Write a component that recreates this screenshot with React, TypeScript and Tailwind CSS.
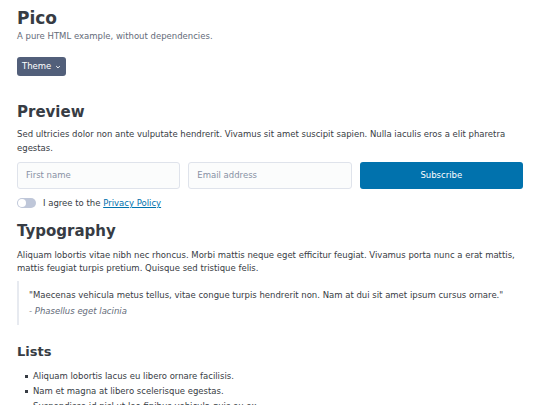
import React from "react";

export default function App() {
  return (
    <div className="min-h-[405px] bg-white px-[17px] text-[#373c44]" style={{ fontFamily: '"DejaVu Sans", sans-serif' }}>
      <div className="pt-[6px]">
        <h1 className="text-[17px] font-bold leading-[24px] text-[#373c44]">Pico</h1>
        <p className="text-[8.5px] leading-[12px] text-[#646b79]">A pure HTML example, without dependencies.</p>
      </div>
      <div className="mt-[15px]">
        <button className="flex h-[19px] items-center gap-[4px] rounded-[3px] bg-[#525f7a] px-[5px] text-[8.5px] text-white">
          Theme
          <svg width="6" height="6" viewBox="0 0 10 10" fill="none" stroke="white" strokeWidth="1.6">
            <path d="M2 3.5 L5 6.5 L8 3.5" />
          </svg>
        </button>
      </div>
      <section className="mt-[25px]">
        <h2 className="text-[15px] font-bold leading-[22px]">Preview</h2>
        <p className="mt-[4px] text-[8.5px] leading-[14px]">
          Sed ultricies dolor non ante vulputate hendrerit. Vivamus sit amet suscipit sapien. Nulla iaculis eros a elit pharetra egestas.
        </p>
        <div className="mt-[7px] grid grid-cols-3 gap-[8px]">
          <div className="flex h-[27px] items-center rounded-[3px] border border-[#dfe3eb] bg-[#fbfcfc] px-[8px] text-[8.5px] text-[#8891a4]">First name</div>
          <div className="flex h-[27px] items-center rounded-[3px] border border-[#dfe3eb] bg-[#fbfcfc] px-[8px] text-[8.5px] text-[#8891a4]">Email address</div>
          <div className="flex h-[27px] items-center justify-center rounded-[3px] bg-[#0172ad] text-[8.5px] text-white">Subscribe</div>
        </div>
        <div className="mt-[7px] flex items-center gap-[7px] text-[8.5px] leading-[14px]">
          <div className="relative h-[10px] w-[19px] rounded-full bg-[#bfc7d9]">
            <div className="absolute left-[1px] top-[1px] h-[8px] w-[8px] rounded-full bg-white" />
          </div>
          <span>
            I agree to the <span className="text-[#0172ad] underline">Privacy Policy</span>
          </span>
        </div>
      </section>
      <section className="mt-[10px]">
        <h2 className="text-[15px] font-bold leading-[22px]">Typography</h2>
        <p className="mt-[7px] text-[8.5px] leading-[13px]">
          Aliquam lobortis vitae nibh nec rhoncus. Morbi mattis neque eget efficitur feugiat. Vivamus porta nunc a erat mattis, mattis feugiat turpis pretium. Quisque sed tristique felis.
        </p>
        <blockquote className="mt-[6px] border-l-[2px] border-[#e7eaf0] py-[7px] pl-[10px]">
          <p className="text-[8.5px] leading-[14px]">
            "Maecenas vehicula metus tellus, vitae congue turpis hendrerit non. Nam at dui sit amet ipsum cursus ornare."
          </p>
          <p className="mt-[2px] text-[8.5px] italic leading-[14px] text-[#646b79]">- Phasellus eget lacinia</p>
        </blockquote>
      </section>
      <section className="mt-[18px]">
        <h3 className="text-[13px] font-bold leading-[18px]">Lists</h3>
        <ul className="mt-[8px] pl-[8px] text-[8.5px] leading-[15px]">
          <li className="flex items-center gap-[5px]"><span className="h-[3px] w-[3px] bg-[#373c44]" />Aliquam lobortis lacus eu libero ornare facilisis.</li>
          <li className="flex items-center gap-[5px]"><span className="h-[3px] w-[3px] bg-[#373c44]" />Nam et magna at libero scelerisque egestas.</li>
          <li className="flex items-center gap-[5px]"><span className="h-[3px] w-[3px] bg-[#373c44]" />Suspendisse id nisl ut leo finibus vehicula quis eu ex.</li>
        </ul>
      </section>
    </div>
  );
}
